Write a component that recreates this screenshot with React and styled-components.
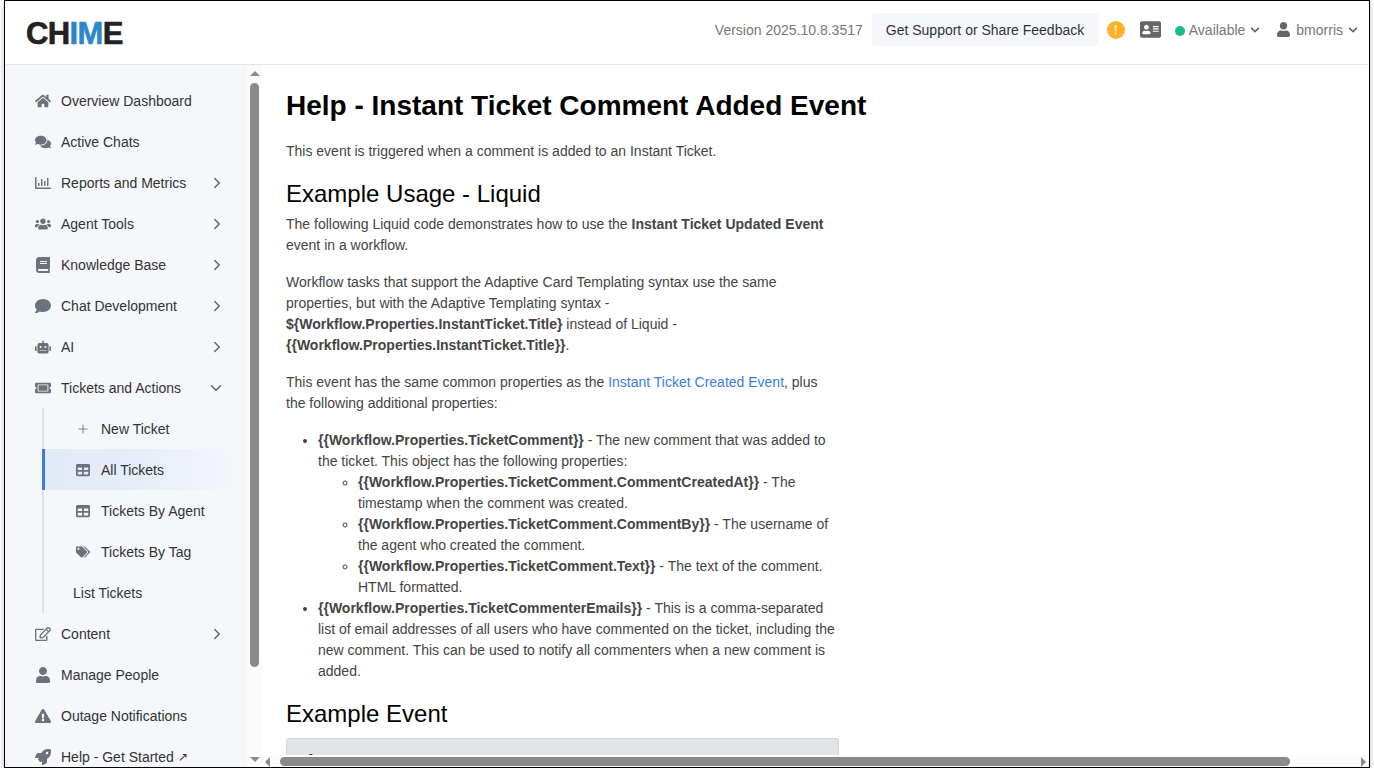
import React from 'react';
import styled, { createGlobalStyle } from 'styled-components';
import {
  FaHome, FaComments, FaRegChartBar, FaChartBar, FaUsers, FaBook, FaComment, FaRobot, FaTicketAlt,
  FaTable, FaTags, FaRegEdit, FaUser, FaExclamationTriangle, FaRocket, FaAddressCard, FaChevronDown,
  FaChevronRight,
} from 'react-icons/fa';
import { Plus, ChevronRight, ChevronDown } from 'lucide-react';

const GlobalStyle = createGlobalStyle`
  html, body {
    margin: 0;
    padding: 0;
    background: white;
    overflow: hidden;
  }
  body {
    font-family: "Liberation Sans", Arial, sans-serif;
    font-size: 14px;
  }
  * {
    box-sizing: border-box;
  }
`;

const Frame = styled.div`
  width: 1366px;
  height: 768px;
  margin-left: 4px;
  border: 1px solid #000;
  box-shadow: 0 3px 6px rgba(0, 0, 0, 0.25);
  display: flex;
  flex-direction: column;
  overflow: hidden;
  background: white;
`;

const Header = styled.header`
  height: 64px;
  flex: none;
  display: flex;
  align-items: center;
  padding: 0 11px 6px 21px;
  border-bottom: 1px solid #e4e6ec;
`;

const Logo = styled.div`
  font-size: 31px;
  font-weight: bold;
  letter-spacing: -0.6px;
  color: #222;
  line-height: 1;
  -webkit-text-stroke: 0.6px currentColor;
  margin-top: 8px;

  span {
    color: #2a88c9;
  }
`;

const HeaderRight = styled.div`
  margin-left: auto;
  display: flex;
  align-items: center;
  color: #777;
`;

const Version = styled.span`
  margin-right: 9px;
`;

const SupportButton = styled.div`
  width: 227px;
  height: 33px;
  display: flex;
  align-items: center;
  padding-left: 14px;
  background: #f5f7fb;
  border-radius: 4px;
  color: #333;
  margin-right: 8px;
`;

const WarningDot = styled.div`
  width: 18px;
  height: 18px;
  border-radius: 50%;
  background: #fdb22c;
  color: white;
  font-size: 12px;
  display: flex;
  align-items: center;
  justify-content: center;
  margin-right: 15px;
`;

const CardIcon = styled(FaAddressCard)`
  width: 21px;
  height: 19px;
  color: #666;
  margin-right: 14px;
`;

const StatusDot = styled.span`
  width: 10px;
  height: 10px;
  border-radius: 50%;
  background: #1abc8b;
  margin-right: 4px;
  margin-top: 2px;
`;

const Caret = styled(FaChevronDown)`
  width: 10px;
  height: 10px;
  color: #666;
  margin-left: 5px;
`;

const StatusGroup = styled.div`
  display: flex;
  align-items: center;
  margin-right: 17px;
`;

const UserGroup = styled.div`
  display: flex;
  align-items: center;
`;

const UserIcon = styled(FaUser)`
  width: 13px;
  height: 15px;
  color: #666;
  margin-right: 6px;
`;

const Body = styled.div`
  flex: 1;
  min-height: 0;
  display: flex;
`;

const Sidebar = styled.nav`
  width: 242px;
  flex: none;
  background: #f5f7fb;
  padding-top: 15px;
  overflow: hidden;
`;

const NavRow = styled.div`
  height: 41px;
  display: flex;
  align-items: center;
  padding-left: ${props => (props.$sub ? '31px' : '30px')};
  color: #333;
  position: relative;
`;

const NavIcon = styled.span`
  width: 16px;
  flex: none;
  margin-right: 10px;
  display: flex;
  justify-content: center;
  color: #6c727c;

  svg {
    width: 16px;
    height: 16px;
  }
`;

const NavArrow = styled.span`
  position: absolute;
  right: ${props => (props.$open ? '22px' : '21px')};
  top: 12px;
  color: #5c6570;
  display: flex;

  svg {
    width: 18px;
    height: 18px;
  }
`;

const SubList = styled.div`
  margin-left: 37px;
  border-left: 2px solid #dfe1e7;
`;

const SubRow = styled.div`
  height: 41px;
  display: flex;
  align-items: center;
  padding-left: ${props => (props.$plain ? '29px' : '32px')};
  margin-right: 7px;
  color: #333;
  ${props => props.$active && `
    margin-left: -2px;
    padding-left: 31px;
    border-left: 3px solid #3b7de0;
    background: linear-gradient(90deg, #e2eaf6 0%, #e6edf8 45%, #f5f7fb 100%);
  `}
`;

const SubIcon = styled.span`
  width: 14px;
  flex: none;
  margin-right: 11px;
  display: flex;
  justify-content: center;
  color: #6c727c;

  svg {
    width: 14px;
    height: 14px;
  }
`;

const ExternalMark = styled.span`
  font-size: 12px;
  margin-left: 4px;
`;

const VerticalTrack = styled.div`
  width: 15px;
  flex: none;
  background: #fbfbfc;
  display: flex;
  flex-direction: column;
  align-items: center;
  padding: 6px 0 5px;
`;

const ArrowUp = styled.span`
  flex: none;
  width: 0;
  height: 0;
  border-left: 5px solid transparent;
  border-right: 5px solid transparent;
  border-bottom: 5px solid #8a8a8a;
`;

const ArrowDown = styled.span`
  flex: none;
  width: 0;
  height: 0;
  border-left: 5px solid transparent;
  border-right: 5px solid transparent;
  border-top: 5px solid #8a8a8a;
  margin-top: auto;
`;

const VerticalThumb = styled.div`
  flex: none;
  width: 9px;
  height: 584px;
  margin-top: 7px;
  border-radius: 5px;
  background: #8a8a8a;
`;

const MainColumn = styled.div`
  flex: 1;
  min-width: 0;
  display: flex;
  flex-direction: column;
`;

const Content = styled.main`
  flex: 1;
  min-height: 0;
  overflow: hidden;
  padding: 22px 0 0 24px;
  color: #444;
  line-height: 21px;
`;

const Title = styled.h1`
  margin: 0 0 17px;
  color: #000;
  font-size: 28px;
  line-height: 37px;
  font-weight: bold;
`;

const Subtitle = styled.h2`
  margin: 17px 0 6px;
  color: #000;
  font-size: 24px;
  line-height: 29px;
  font-weight: normal;
`;

const Copy = styled.div`
  width: 553px;
`;

const Para = styled.p`
  margin: 0 0 16px;
`;

const Link = styled.a`
  color: #3b7de0;
  text-decoration: none;
`;

const BulletList = styled.ul`
  margin: 0 0 16px;
  padding-left: 32px;
  list-style: disc;

  ul {
    margin: 0;
    list-style: circle;
  }
`;

const CodeBlock = styled.pre`
  margin: 10px 0 0;
  width: 553px;
  height: 120px;
  padding: 12px 18px;
  background: #e2e3e5;
  border: 1px solid #d5d6d9;
  border-radius: 3px;
  font-family: "Liberation Mono", monospace;
  font-size: 14px;
  color: #333;
`;

const HorizontalTrack = styled.div`
  height: 12px;
  flex: none;
  background: #fbfbfc;
  display: flex;
  align-items: center;
  padding: 1px 2px 0 0;
`;

const ArrowLeft = styled.span`
  width: 0;
  height: 0;
  margin-left: 3px;
  border-top: 5px solid transparent;
  border-bottom: 5px solid transparent;
  border-right: 5px solid #8a8a8a;
`;

const ArrowRight = styled.span`
  width: 0;
  height: 0;
  margin-left: auto;
  margin-right: 1px;
  border-top: 5px solid transparent;
  border-bottom: 5px solid transparent;
  border-left: 5px solid #8a8a8a;
`;

const HorizontalThumb = styled.div`
  width: 1010px;
  height: 9px;
  margin-left: 10px;
  border-radius: 5px;
  background: #8a8a8a;
`;

const topItems = [
  { label: 'Overview Dashboard', icon: <FaHome /> },
  { label: 'Active Chats', icon: <FaComments /> },
  { label: 'Reports and Metrics', icon: <FaRegChartBar />, arrow: true },
  { label: 'Agent Tools', icon: <FaUsers />, arrow: true },
  { label: 'Knowledge Base', icon: <FaBook />, arrow: true },
  { label: 'Chat Development', icon: <FaComment />, arrow: true },
  { label: 'AI', icon: <FaRobot />, arrow: true },
];

const bottomItems = [
  { label: 'Content', icon: <FaRegEdit />, arrow: true },
  { label: 'Manage People', icon: <FaUser /> },
  { label: 'Outage Notifications', icon: <FaExclamationTriangle /> },
  { label: 'Help - Get Started', icon: <FaRocket />, external: true },
];

const NavItem = ({ item }) => (
  <NavRow>
    <NavIcon>{item.icon}</NavIcon>
    {item.label}
    {item.external && <ExternalMark>↗</ExternalMark>}
    {item.arrow && (
      <NavArrow>
        <ChevronRight strokeWidth={2} />
      </NavArrow>
    )}
  </NavRow>
);

export default function App() {
  return (
    <Frame>
      <GlobalStyle />
      <Header>
        <Logo>
          CH
          <span>IM</span>
          E
        </Logo>
        <HeaderRight>
          <Version>Version 2025.10.8.3517</Version>
          <SupportButton>Get Support or Share Feedback</SupportButton>
          <WarningDot>!</WarningDot>
          <CardIcon />
          <StatusGroup>
            <StatusDot />
            Available
            <Caret />
          </StatusGroup>
          <UserGroup>
            <UserIcon />
            bmorris
            <Caret />
          </UserGroup>
        </HeaderRight>
      </Header>
      <Body>
        <Sidebar>
          {topItems.map(item => <NavItem key={item.label} item={item} />)}
          <NavRow>
            <NavIcon><FaTicketAlt /></NavIcon>
            Tickets and Actions
            <NavArrow $open>
              <ChevronDown strokeWidth={2} />
            </NavArrow>
          </NavRow>
          <SubList>
            <SubRow>
              <SubIcon><Plus strokeWidth={1.5} /></SubIcon>
              New Ticket
            </SubRow>
            <SubRow $active>
              <SubIcon><FaTable /></SubIcon>
              All Tickets
            </SubRow>
            <SubRow>
              <SubIcon><FaTable /></SubIcon>
              Tickets By Agent
            </SubRow>
            <SubRow>
              <SubIcon><FaTags /></SubIcon>
              Tickets By Tag
            </SubRow>
            <SubRow $plain>List Tickets</SubRow>
          </SubList>
          {bottomItems.map(item => <NavItem key={item.label} item={item} />)}
        </Sidebar>
        <VerticalTrack>
          <ArrowUp />
          <VerticalThumb />
          <ArrowDown />
        </VerticalTrack>
        <MainColumn>
          <Content>
            <Title>Help - Instant Ticket Comment Added Event</Title>
            <Copy>
              <Para>This event is triggered when a comment is added to an Instant Ticket.</Para>
              <Subtitle>Example Usage - Liquid</Subtitle>
              <Para>
                The following Liquid code demonstrates how to use the <b>Instant Ticket Updated Event</b> event in a workflow.
              </Para>
              <Para>
                Workflow tasks that support the Adaptive Card Templating syntax use the same
                <br />
                properties, but with the Adaptive Templating syntax -
                <br />
                <b>{'${Workflow.Properties.InstantTicket.Title}'}</b> instead of Liquid -
                <br />
                <b>{'{{Workflow.Properties.InstantTicket.Title}}'}</b>.
              </Para>
              <Para>
                This event has the same common properties as the <Link>Instant Ticket Created Event</Link>, plus
                <br />
                the following additional properties:
              </Para>
              <BulletList>
                <li>
                  <b>{'{{Workflow.Properties.TicketComment}}'}</b> - The new comment that was added to
                  <br />
                  the ticket. This object has the following properties:
                  <ul>
                    <li>
                      <b>{'{{Workflow.Properties.TicketComment.CommentCreatedAt}}'}</b> - The
                      <br />
                      timestamp when the comment was created.
                    </li>
                    <li>
                      <b>{'{{Workflow.Properties.TicketComment.CommentBy}}'}</b> - The username of
                      <br />
                      the agent who created the comment.
                    </li>
                    <li>
                      <b>{'{{Workflow.Properties.TicketComment.Text}}'}</b> - The text of the comment.
                      <br />
                      HTML formatted.
                    </li>
                  </ul>
                </li>
                <li>
                  <b>{'{{Workflow.Properties.TicketCommenterEmails}}'}</b> - This is a comma-separated
                  <br />
                  list of email addresses of all users who have commented on the ticket, including the
                  <br />
                  new comment. This can be used to notify all commenters when a new comment is
                  <br />
                  added.
                </li>
              </BulletList>
              <Subtitle>Example Event</Subtitle>
              <CodeBlock>{'{'}</CodeBlock>
            </Copy>
          </Content>
          <HorizontalTrack>
            <ArrowLeft />
            <HorizontalThumb />
            <ArrowRight />
          </HorizontalTrack>
        </MainColumn>
      </Body>
    </Frame>
  );
}
